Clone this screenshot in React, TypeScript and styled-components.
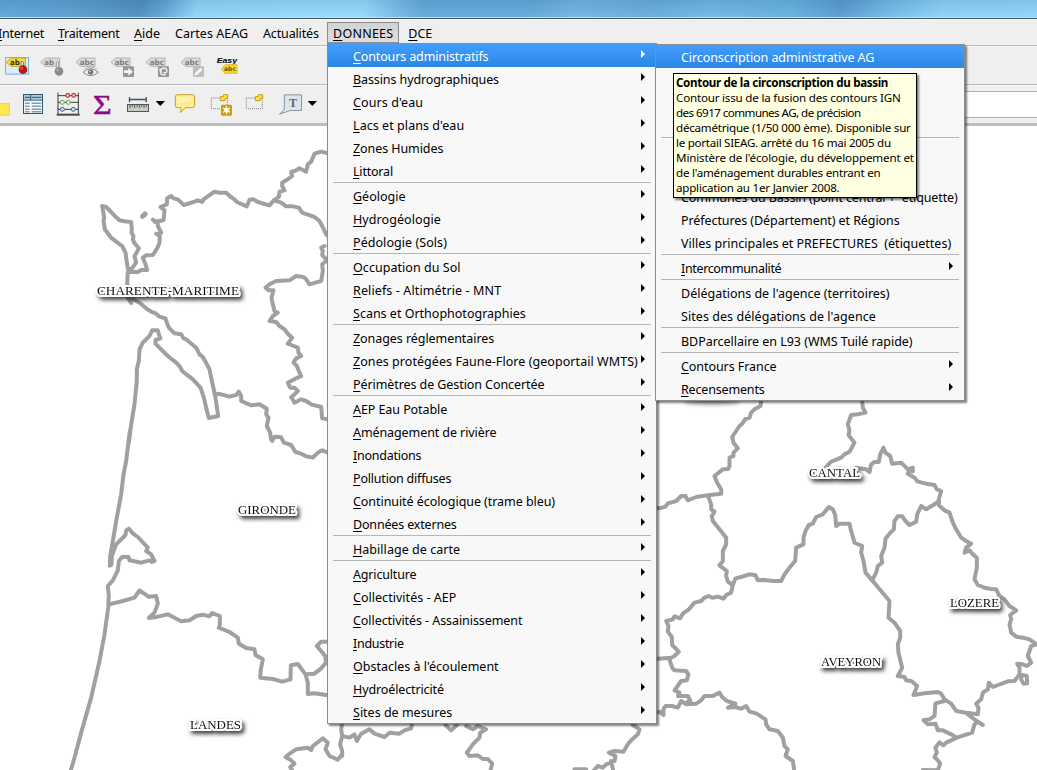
import React from "react";
import styled, { createGlobalStyle, css } from "styled-components";

const GlobalStyle = createGlobalStyle`
  html, body { margin: 0; padding: 0; }
  body {
    width: 1037px;
    height: 770px;
    overflow: hidden;
    background: #fff;
    font-family: "Noto Sans", "Open Sans", sans-serif;
    font-size: 12px;
    color: #000;
  }
`;

const Window = styled.div`
  position: relative;
  width: 1037px;
  height: 770px;
  overflow: hidden;
  display: flex;
  flex-direction: column;
  background: #efefef;
`;

const TitleBar = styled.div`
  flex: none;
  height: 17px;
  background:
    linear-gradient(to bottom, rgba(20, 70, 120, 0.12), rgba(255, 255, 255, 0.05)),
    linear-gradient(100deg, #5ba6d8 0, #5b9fd0 70px, #4f8dc0 140px, #62a8d8 165px, #8ed5f7 195px, #94daf9 300px,
      #94daf9 360px, #70b4e3 400px, #62a9da 420px, #62a9da 520px, #70b5e2 570px, #67add9 640px, #6eb7e3 700px, #66b1df 780px,
      #579bd0 830px, #74bce8 880px, #8bd2f6 930px, #8ed6f8 1037px);
  border-bottom: 1px solid #c2e0f1;
`;

const MenuBar = styled.div`
  flex: none;
  box-sizing: border-box;
  height: 28px;
  display: flex;
  align-items: flex-start;
  border-top: 1px solid #3f5568;
  border-bottom: 1px solid #b9b9b9;
  padding-top: 3px;
  box-shadow: inset 0 1px #fafafa;
`;

const MenuTitle = styled.div<{ $w: number; $track?: number; $active?: boolean }>`
  box-sizing: border-box;
  flex: none;
  width: ${(p) => p.$w}px;
  height: 21px;
  padding-left: 5px;
  line-height: 21px;
  white-space: pre;
  font-size: 12.5px;
  letter-spacing: ${(p) => p.$track ?? 0}px;
  border: 1px solid transparent;
  ${(p) =>
    p.$active &&
    css`
      border-color: #8c8c8c;
      background: linear-gradient(#d2d2d2, #dedede);
    `}
`;

const FirstMenuTitle = styled(MenuTitle)`
  margin-left: -8px;
`;

const ToolBar = styled.div<{ $last?: boolean }>`
  flex: none;
  box-sizing: border-box;
  height: ${(p) => (p.$last ? 41 : 39)}px;
  display: flex;
  align-items: flex-start;
  border-bottom: ${(p) => (p.$last ? "3px solid #bdbdbd" : "1px solid #b9b9b9")};
  box-shadow: inset 0 1px #f8f8f8;
`;

const InputStrip = styled.div`
  margin: 6px 0 0 auto;
  width: 110px;
  height: 25px;
  background: #fff;
  border-top: 1px solid #b0b0b0;
  border-bottom: 1px solid #b0b0b0;
`;

const MapArea = styled.div`
  flex: 1;
  background: #fff;
  overflow: hidden;
  svg { display: block; }
`;

const MenuPanel = styled.div<{ $x: number; $y: number; $w: number }>`
  position: absolute;
  left: ${(p) => p.$x}px;
  top: ${(p) => p.$y}px;
  width: ${(p) => p.$w}px;
  box-sizing: border-box;
  background: #f8f8f8;
  border: 1px solid #8c8c8c;
  box-shadow: 2px 2px 2px rgba(0, 0, 0, 0.5);
`;

const Row = styled.div<{ $active?: boolean }>`
  box-sizing: border-box;
  height: 23px;
  padding-left: 25px;
  padding-right: 11px;
  display: flex;
  justify-content: space-between;
  line-height: 26px;
  white-space: pre;
  font-size: 12.5px;
  ${(p) =>
    p.$active &&
    css`
      color: #fff;
      background: linear-gradient(#429dfc, #2b87e4);
    `}
`;

const Label = styled.span<{ $track: number }>`
  letter-spacing: ${(p) => p.$track}px;
`;

const Mnemonic = styled.span`
  text-decoration: underline;
  text-decoration-thickness: 1px;
  text-underline-offset: 2px;
  text-decoration-skip-ink: none;
`;

const Arrow = styled.span`
  margin-top: 6px;
  width: 0;
  height: 0;
  border: 4px solid transparent;
  border-left-color: currentColor;
  border-right: 0;
`;

const Divider = styled.div`
  height: 1px;
  margin: 0 5px 1px;
  background: #b6b6b6;
`;

const Tooltip = styled.div`
  position: absolute;
  left: 673px;
  top: 73px;
  width: 244px;
  height: 125px;
  box-sizing: border-box;
  padding: 1px 2px;
  border: 1px solid #000;
  background: #ffffe1;
  box-shadow: 2px 2px 2px rgba(0, 0, 0, 0.5);
  font-size: 11.6px;
  line-height: 15px;
  white-space: pre;
`;

const TipLine = styled.div<{ $track: number; $bold?: boolean }>`
  letter-spacing: ${(p) => p.$track}px;
  font-weight: ${(p) => (p.$bold ? 700 : 400)};
`;

type Item = { t: string; track?: number; sub?: boolean; key?: boolean; active?: boolean };

const mainMenu: Item[][] = [
  [
    { t: "Contours administratifs", track: -0.13, active: true },
    { t: "Bassins hydrographiques", track: -0.1 },
    { t: "Cours d'eau", track: 0.09 },
    { t: "Lacs et plans d'eau", track: 0.06 },
    { t: "Zones Humides", track: -0.08 },
    { t: "Littoral", track: -0.2 },
  ],
  [{ t: "Géologie" }, { t: "Hydrogéologie", track: 0.08 }, { t: "Pédologie (Sols)", track: 0.06 }],
  [
    { t: "Occupation du Sol", track: 0.05 },
    { t: "Reliefs - Altimétrie - MNT", track: 0.12 },
    { t: "Scans et Orthophotographies" },
  ],
  [
    { t: "Zonages réglementaires", track: -0.06 },
    { t: "Zones protégées Faune-Flore (geoportail WMTS)", track: 0.06 },
    { t: "Périmètres de Gestion Concertée", track: -0.08 },
  ],
  [
    { t: "AEP Eau Potable", track: -0.07 },
    { t: "Aménagement de rivière", track: -0.09 },
    { t: "Inondations", track: -0.25 },
    { t: "Pollution diffuses", track: -0.2 },
    { t: "Continuité écologique (trame bleu)", track: -0.06 },
    { t: "Données externes", track: -0.17 },
  ],
  [{ t: "Habillage de carte", track: 0.04 }],
  [
    { t: "Agriculture", track: -0.17 },
    { t: "Collectivités - AEP", track: 0.03 },
    { t: "Collectivités - Assainissement", track: -0.07 },
    { t: "Industrie", track: -0.3 },
    { t: "Obstacles à l'écoulement" },
    { t: "Hydroélectricité", track: -0.12 },
    { t: "Sites de mesures" },
  ],
].map((g) => g.map((i) => ({ ...i, sub: true, key: true })));

const subMenu: Item[][] = [
  [{ t: "Circonscription administrative AG", track: -0.08, active: true }, { t: "" }, { t: "" }, { t: "" }],
  [
    { t: "" },
    { t: "" },
    { t: "Communes du Bassin (point central +  étiquette)", track: -0.13 },
    { t: "Préfectures (Département) et Régions", track: -0.08 },
    { t: "Villes principales et PREFECTURES  (étiquettes)" },
  ],
  [{ t: "Intercommunalité", track: -0.35, sub: true, key: true }],
  [{ t: "Délégations de l'agence (territoires)" }, { t: "Sites des délégations de l'agence", track: 0.06 }],
  [{ t: "BDParcellaire en L93 (WMS Tuilé rapide)", track: -0.03 }],
  [
    { t: "Contours France", track: -0.07, sub: true, key: true },
    { t: "Recensements", track: -0.17, sub: true, key: true },
  ],
];

const tipLines: [string, number][] = [
  ["Contour de la circonscription du bassin", -0.33],
  ["Contour issu de la fusion des contours IGN", -0.2],
  ["des 6917 communes AG, de précision", -0.55],
  ["décamétrique (1/50 000 ème). Disponible sur", -0.23],
  ["le portail SIEAG. arrêté du 16 mai 2005 du", -0.28],
  ["Ministère de l'écologie, du développement et", -0.14],
  ["de l'aménagement durables entrant en", -0.22],
  ["application au 1er Janvier 2008.", -0.22],
];

function Text({ text, mnemonic }: { text: string; mnemonic?: boolean }) {
  return mnemonic ? (
    <>
      <Mnemonic>{text[0]}</Mnemonic>
      {text.slice(1)}
    </>
  ) : (
    <>{text}</>
  );
}

function Menu({ x, y, w, groups }: { x: number; y: number; w: number; groups: Item[][] }) {
  return (
    <MenuPanel $x={x} $y={y} $w={w}>
      {groups.map((group, g) => (
        <React.Fragment key={g}>
          {g > 0 && <Divider />}
          {group.map((item, i) => (
            <Row key={i} $active={item.active}>
              <Label $track={item.track ?? 0}>
                <Text text={item.t} mnemonic={item.key} />
              </Label>
              {item.sub && <Arrow />}
            </Row>
          ))}
        </React.Fragment>
      ))}
    </MenuPanel>
  );
}

const Glyph = styled.svg`
  flex: none;
`;

/* Icons are drawn on a grid of three units per pixel. */
function Icon({ x, y, w, children }: { x: number; y: number; w: number; children: React.ReactNode }) {
  return (
    <Glyph width={w / 3} height={38} viewBox={`${x} ${y} ${w} 114`}>
      {children}
    </Glyph>
  );
}

function Tag({ x, y = 172, text, gold }: { x: number; y?: number; text: string; gold?: boolean }) {
  return (
    <g>
      <path
        d={`M${x} ${y + 15} L${x + 14} ${y + 2} H${x + 57} V${y + 27} H${x + 14} Z`}
        fill={gold ? "#f6dc4a" : "#dcdcdc"}
        stroke={gold ? "#c9a80d" : "#b4b4b4"}
        strokeWidth="3"
      />
      <text
        x={x + 11}
        y={y + 23}
        fontFamily="DejaVu Sans"
        fontWeight="700"
        fontSize="23"
        textLength={text.length === 2 ? 29 : 43}
        lengthAdjust="spacingAndGlyphs"
        fill={gold ? "#3a3200" : "#7d7d7d"}
      >
        {text}
      </text>
    </g>
  );
}

const Dropdown = ({ x }: { x: number }) => <path d={`M${x} 303h28l-14 15z`} fill="#000" />;

function LabelIcons() {
  return (
    <>
      <Icon x={0} y={138} w={105}>
        <rect x="16.5" y="172.5" width="69" height="50" fill="#dcebfb" stroke="#7fb2ea" strokeWidth="3" />
        <Tag x={19} text="ab" gold />
        <path d="M63 200v-14q4-5 7 0v18" fill="#eee" stroke="#777" strokeWidth="3" />
        <circle cx="69" cy="209" r="13" fill="#b01c1c" />
        <circle cx="65" cy="205" r="4" fill="#d96060" />
      </Icon>
      <Icon x={105} y={138} w={105}>
        <Tag x={122} text="ab" />
        <path d="M169 203v-17q4-5 7 0v18" fill="#eee" stroke="#999" strokeWidth="3" />
        <circle cx="177" cy="214" r="13" fill="#8b8b8b" />
        <circle cx="173" cy="210" r="4" fill="#b0b0b0" />
      </Icon>
      <Icon x={210} y={138} w={105}>
        <Tag x={228} text="abc" />
        <path d="M249 217q23-22 46 0q-23 20-46 0z" fill="#eee" stroke="#888" strokeWidth="3" />
        <path d="M252 208q20-14 40 0" fill="none" stroke="#999" strokeWidth="2" />
        <circle cx="272" cy="216" r="8" fill="#777" />
        <circle cx="270" cy="214" r="2.5" fill="#ddd" />
      </Icon>
      <Icon x={315} y={138} w={105}>
        <Tag x={333} text="abc" />
        <rect x="369" y="199" width="33" height="32" rx="3" fill="#969696" />
        <path d="M372 211h13v-8l14 12-14 12v-8h-13z" fill="#f4f4f4" />
      </Icon>
      <Icon x={420} y={138} w={105}>
        <Tag x={438} text="abc" />
        <rect x="474" y="199" width="33" height="32" rx="3" fill="#969696" />
        <path d="M479 206l5 17 13 2M484 221q-5-17 8-17q11 2 8 11q-3 6-9 2" fill="none" stroke="#f4f4f4" strokeWidth="4" />
      </Icon>
      <Icon x={525} y={138} w={105}>
        <Tag x={543} text="abc" />
        <rect x="579" y="199" width="33" height="32" rx="3" fill="#bdbdbd" />
        <path d="M583 227l3-9 16-15 6 6-16 15z" fill="#f6f6f6" />
      </Icon>
      <Icon x={630} y={138} w={105}>
        <text x="650" y="189" fontFamily="Liberation Sans" fontWeight="700" fontStyle="italic" fontSize="23" textLength="61" lengthAdjust="spacingAndGlyphs">
          Easy
        </text>
        <path d="M664 207l11-13h36v26h-36z" fill="#f2d43c" stroke="#e2c02a" strokeWidth="3" />
        <text x="672" y="214" fontFamily="DejaVu Sans" fontWeight="700" fontSize="19" textLength="36" lengthAdjust="spacingAndGlyphs" fill="#6e5c00">
          abc
        </text>
      </Icon>
    </>
  );
}

function ToolIcons() {
  return (
    <>
      <Icon x={0} y={255} w={45}>
        <rect x="-10" y="311" width="38" height="35" fill="#ffe94e" stroke="#c9a91c" strokeWidth="2.5" strokeDasharray="3 3" />
      </Icon>
      <Icon x={45} y={255} w={105}>
        <rect x="70.500" y="283.500" width="57" height="57" fill="#f7fbfe" stroke="#33566f" strokeWidth="3" />
        <rect x="72" y="285" width="54" height="14" fill="#a9cbe3" />
        <path d="M72 300.500h54M92 285v15" stroke="#33566f" strokeWidth="3" />
        <path d="M75 292h15M95 292h29" stroke="#33566f" strokeWidth="3" />
        <path d="M75 309.500h14M75 318.500h14M75 327.500h14M75 335.500h14M95 309.500h29M95 318.500h29M95 327.500h29M95 335.500h29" stroke="#44718f" strokeWidth="3" />
      </Icon>
      <Icon x={150} y={255} w={105}>
        <path d="M174 278v66M235 278v66M174 287h61M174 307h61M174 328h61" stroke="#3a3a3a" strokeWidth="3" />
        <path d="M170 344h69" stroke="#4a4a4a" strokeWidth="6" />
        <g strokeWidth="3">
          <g fill="#f4b1b1" stroke="#bd1a1a"><circle cx="203" cy="286" r="6" /><circle cx="221" cy="286" r="6" /></g>
          <g fill="#e3f6e0" stroke="#55a65a"><circle cx="187" cy="307" r="6" /><circle cx="205" cy="307" r="6" /></g>
          <g fill="#cfe3f5" stroke="#34648c"><circle cx="187" cy="328" r="6" /><circle cx="220" cy="328" r="6" /></g>
        </g>
      </Icon>
      <Icon x={255} y={255} w={105}>
        <text x="279" y="341" fontFamily="Liberation Serif" fontSize="84" textLength="56" lengthAdjust="spacingAndGlyphs" fill="#8b0a8b" stroke="#8b0a8b" strokeWidth="1.5">
          Σ
        </text>
      </Icon>
      <Icon x={360} y={255} w={150}>
        <path d="M388.500 291v16M438.500 291v16M388 298.500h50" stroke="#33566f" strokeWidth="4" />
        <rect x="382.500" y="313.500" width="63" height="21" fill="#c8ccc6" stroke="#555" strokeWidth="3" />
        <path d="M390 314v10M397 314v7M404 314v10M411 314v7M418 314v10M425 314v7M432 314v10M439 314v7" stroke="#444" strokeWidth="2.500" />
        <Dropdown x={467} />
      </Icon>
      <Icon x={510} y={255} w={105}>
        <path d="M533 284h44q7 0 7 7v25q0 7-7 7h-20l-16 15q4-9 1-15h-9q-7 0-7-7v-25q0-7 7-7z" fill="#fdeb8e" stroke="#c7a020" strokeWidth="3" />
        <path d="M531 291h48v12q-22 1-48 10z" fill="#fff6c2" opacity=".6" />
      </Icon>
      <Icon x={615} y={255} w={105}>
        <rect x="634" y="294" width="48" height="32" fill="none" stroke="#6a6a6a" strokeWidth="2.500" strokeDasharray="3 3" />
        <path d="M661 299v-9h9v-6h13v12h-8v6h-14z" fill="#ffe13d" stroke="#c49d10" strokeWidth="3" />
        <rect x="663" y="314" width="33" height="33" rx="4" fill="#c99f0c" />
        <path d="M679.500 318v25M669 324l21 13M690 324l-21 13" stroke="#fff7cf" strokeWidth="4" />
        <circle cx="679.500" cy="330.500" r="7" fill="#fffbe5" />
      </Icon>
      <Icon x={720} y={255} w={105}>
        <rect x="739" y="294" width="48" height="32" fill="none" stroke="#6a6a6a" strokeWidth="2.500" strokeDasharray="3 3" />
        <path d="M766 299v-9h9v-6h13v12h-8v6h-14z" fill="#ffe13d" stroke="#c49d10" strokeWidth="3" />
      </Icon>
      <Icon x={825} y={255} w={150}>
        <path d="M853.500 284.500h51v47h-34l-32 11 14-13z" fill="#dbe5ee" stroke="#8d969c" strokeWidth="3" />
        <text x="867" y="320" fontFamily="Liberation Serif" fontWeight="700" fontSize="36" fill="#5b6770">
          T
        </text>
        <Dropdown x={923} />
      </Icon>
    </>
  );
}

const Boundaries = styled.g`
  fill: none;
  stroke: #a0a0a0;
  stroke-width: 12px;
  stroke-linejoin: round;
  stroke-linecap: round;
`;

const PlaceName = styled.text`
  font-family: "Liberation Serif", serif;
  font-size: 13px;
  fill: #111;
  stroke: #fff;
  stroke-width: 4px;
  stroke-linejoin: round;
  paint-order: stroke;
`;

const places: [string, number, number, number][] = [
  ["CHARENTE-MARITIME", 97, 295, 142],
  ["GIRONDE", 238, 514, 58],
  ["LANDES", 190, 729, 51],
  ["CANTAL", 809, 477, 51],
  ["LOZERE", 950, 607, 49],
  ["AVEYRON", 821, 666, 60],
];

function DepartmentMap() {
  return (
    <svg width="1037" height="645" viewBox="0 125 1037 645">
      <defs>
        <filter id="drop" x="-20%" y="-60%" width="140%" height="260%">
          <feDropShadow dx="2.500" dy="3" stdDeviation="2" floodColor="#000" floodOpacity="0.75" />
        </filter>
        <filter id="soft" x="-20%" y="-100%" width="140%" height="300%">
          <feGaussianBlur stdDeviation="2" />
        </filter>
      </defs>
      <Boundaries transform="translate(-.5 120) scale(.33333)">
        <path d="M308 255L314 290L312 300L316 325L335 350L350 362L368 375L378 395L382 425L385 442L395 445L410 425L405 405L411 395L418 382L404 365L400 355L402 345L396 335L397 325L395 303L375 301L360 298L345 284L330 268L320 258Z" />
        <path strokeWidth="15" d="M429 286l8-7" />
        <path d="M385 452L383 490L385 530L395 546M385 452L415 453L425 447L443 447L438 430L430 410L440 403L460 402L468 390L475 378L480 365L481 345L470 338L485 335L475 315L475 305L460 296M465 302L492 298L495 268L483 258L502 250L503 232L515 225L522 232L535 235L553 252L585 242L595 238L608 243L612 235L645 212L660 215L680 215L690 225L705 235L712 243L742 256L750 236L762 235L775 243L810 253L823 238L838 228L840 212L855 208L848 195L848 185L860 178L878 165L875 153L890 148L900 142L920 152L925 130L935 122L945 98L965 92L985 97" />
        <path d="M823 238L845 245L860 256L880 256L898 260L908 275L925 281L945 288L960 300L968 315L980 340L985 345" />
        <path d="M400 535L420 545L440 562L455 572L470 578L480 587L498 592L502 605L508 620L525 637L545 640L552 652L560 655L590 680L600 700L610 708L622 730L630 745L635 770L648 830L656 885L628 891L620 860L613 830L603 800L580 775L548 750L540 735L530 725L505 705L485 685L468 668L468 657L483 652L478 640L475 628L458 628L450 645L430 665L420 685L418 720L412 745L412 780L405 850L395 910L388 965" />
        <path d="M975 375L965 380L970 390L968 402L978 412L980 420L968 430L970 450L965 480L950 484L930 490L920 475L912 468L890 465L870 478L830 480L810 490L798 500L808 508L822 508L816 530L820 550L825 570L835 575L820 585L810 600L830 603L840 615L855 625L865 638L878 650L865 668L875 672L895 680L897 695L905 705L890 712L882 725L892 735L898 750L905 765L890 772L865 785L872 800L885 800L895 810L885 820L875 828L885 845L905 835L920 840L935 850L965 858L968 892L985 895" />
        <path d="M648 818L665 820L690 827L710 822L718 812L725 825L725 840L755 853L780 850L802 863L800 880L807 890L802 915L812 935L815 955L818 960L826 947L845 949L853 965L875 972L888 993L905 998L920 1006L940 1010L955 995L968 988L985 995" />
      </Boundaries>
      <Boundaries transform="translate(-.5 430) scale(.33333)">
        <path d="M391 0L380 90L372 130L365 190L350 270L340 330L332 375L331 404L336 400L337 375L350 340L378 312L380 298L388 293L400 307L415 318L445 350L440 360L455 370L465 390L458 393L450 388L425 395L390 388L387 378L368 378L358 390L355 418L340 448L325 465L328 495L326 530L315 610L300 690L275 800L245 905L225 980L212 1025" />
        <path d="M328 520L370 510L405 500L420 478L447 497L470 495L475 518L465 545L448 561L475 557L505 550L545 571L570 568L590 555L610 551L630 556L638 546L661 555L661 583L658 590L690 603L715 620L718 638L740 651L765 655L768 672L790 685L784 715L782 740L820 744L848 752L873 745L874 703L895 699L918 730L945 728L965 712L980 695L977 675L965 660L952 645L965 632L985 632M918 730L925 755L925 789L945 787L985 793" />
        <path d="M882 1025L872 1008L885 998L875 988L858 978L870 968L875 965L890 955L925 950L935 957L940 945L970 922L985 935L978 955L990 975L1015 986L1028 970" />
      </Boundaries>
      <Boundaries transform="translate(319.500 700) scale(.33333)">
        <path d="M68 165L68 150L62 130L68 105L65 85L68 65M68 105L90 110L105 100L112 120L125 98L150 85L165 98L195 108L210 95L240 98L255 88L275 82L278 65M378 72L395 88L412 72M440 75L460 85L475 75L500 85L482 95L480 110L460 130L442 155L450 165L475 163L490 174L505 174L518 188L512 212M940 72L960 85L955 100L935 118L925 130L912 152L885 150L868 155L888 165L885 180L860 190L850 200L835 195L820 212M875 180L882 212M765 205L800 205" />
      </Boundaries>
      <Boundaries transform="translate(649.500 390) scale(.33333)">
        <path d="M335 30L333 45L315 55L305 65L300 80L288 84L278 98L270 105L248 138L252 155L265 172L252 185L252 195L240 200L240 225L236 234L220 235L195 255L203 275L215 295L215 308L175 313L140 318L115 328L108 315L95 315L80 330L55 337L48 347L30 352L20 350M175 313L185 340L185 355L195 362L187 375L190 390L210 415L230 440L230 460L220 480L220 510L210 523L232 540L230 555L235 572L250 582L258 562L275 558L300 550L318 553L325 568L345 567L370 570L395 570L405 550L420 530L437 510L440 470L462 460L462 440L468 420L478 402L490 398L500 378L520 370L538 348L550 355L557 372L560 405L570 398L600 398L605 420L615 455L638 465L635 485L642 510L648 545L668 568L695 600L720 630L717 680L735 695L752 720L752 740L745 760L747 785L758 830L745 855L765 858L770 868L785 870L803 885L792 912L825 907L865 903L875 908L885 925L905 938L920 960L950 965L985 970L987 950L980 938L995 925L1000 905L1015 895L1018 875L1030 888L1075 871L1095 870L1110 850L1110 830L1103 818L1120 820L1132 825L1145 815L1135 795L1145 765L1161 760L1140 745L1120 740L1100 737L1085 725L1080 700L1085 685L1082 672L1100 658L1080 645L1065 625L1050 615L1040 595L1025 594L1005 590L985 582L975 565L982 530L982 500L970 490L960 478L945 485L950 470L965 458L950 450L935 440L920 415L910 395L900 365L885 358L868 343L868 325L875 300L862 295L855 282L830 278L805 272L795 260L775 248L780 238L790 241L790 230L775 235L755 215L728 218L722 195L708 185L702 170L692 190L688 213L675 213L665 220L660 243L650 235L620 230" />
        <path d="M868 330L850 343L830 355L815 345L803 370L800 392L780 402L768 390L758 376L745 376L735 390L733 415L720 428L708 443L705 470L695 495L698 515L685 525L680 545L668 568" />
        <path d="M638 30L640 50L648 65L625 70L605 72L595 100L600 118L597 132L615 155L607 170L600 182L585 190L575 200L545 212L528 230" />
        <path d="M250 582L245 605L230 612L222 623L205 617L188 620L178 615L165 620L155 630L135 635L118 655L100 668L92 682L75 676L70 685L50 690L57 705L55 722L67 738L68 762L88 782L75 795L65 800L25 803M60 805L68 830L75 838L110 840L117 850L112 868L95 870L75 898L90 905L85 915L115 915L123 930L110 935" />
        <path d="M20 965L30 962L42 972L42 955L48 945L68 945L85 950L95 930L110 940L140 938L155 928L165 915L190 915L210 905L218 918L232 930L258 938L235 950L255 948L275 953L290 945L300 962L320 967L348 985L350 1000L360 1015L385 1020L400 1040L405 1065L415 1075L408 1095L430 1110L435 1145" />
        <path d="M885 930L858 937L855 975L840 985L822 988L835 1000L858 998L865 1018L880 1018L905 1030L922 1040L968 1025L975 1000L985 992L1000 1002L975 985L955 970M922 1040L890 1055L882 1063L870 1054L858 1070L862 1085L855 1098L865 1108L872 1118L865 1138L820 1137" />
        <path d="M1115 855L1115 865L1122 878L1133 877L1132 855L1118 852" />
      </Boundaries>
      <ellipse cx="712" cy="401" rx="28" ry="2.500" fill="#555" filter="url(#soft)" opacity=".6" />
      {places.map(([name, x, y, w]) => (
        <g key={name} filter="url(#drop)">
          <PlaceName x={x} y={y - 0.7} textLength={w} lengthAdjust="spacingAndGlyphs">
            {name}
          </PlaceName>
        </g>
      ))}
    </svg>
  );
}

export default function App() {
  return (
    <Window>
      <GlobalStyle />
      <TitleBar />
      <MenuBar>
        <FirstMenuTitle $w={60} $track={-0.25}><Text text="Internet" mnemonic /></FirstMenuTitle>
        <MenuTitle $w={76} $track={-0.25}><Text text="Traitement" mnemonic /></MenuTitle>
        <MenuTitle $w={41}><Text text="Aide" mnemonic /></MenuTitle>
        <MenuTitle $w={88} $track={0.05}>Cartes AEAG</MenuTitle>
        <MenuTitle $w={70} $track={-0.15}>Actualités</MenuTitle>
        <MenuTitle $w={72} $track={0.25} $active><Text text="DONNEES" mnemonic /></MenuTitle>
        <MenuTitle $w={50}> <Text text="DCE" mnemonic /></MenuTitle>
      </MenuBar>
      <ToolBar>
        <LabelIcons />
      </ToolBar>
      <ToolBar $last>
        <ToolIcons />
        <InputStrip />
      </ToolBar>
      <MapArea>
        <DepartmentMap />
      </MapArea>
      <Menu x={327} y={43} w={330} groups={mainMenu} />
      <Menu x={655} y={44} w={310} groups={subMenu} />
      <Tooltip>
        {tipLines.map(([line, track], i) => (
          <TipLine key={i} $track={track} $bold={i === 0}>
            {line}
          </TipLine>
        ))}
      </Tooltip>
    </Window>
  );
}
